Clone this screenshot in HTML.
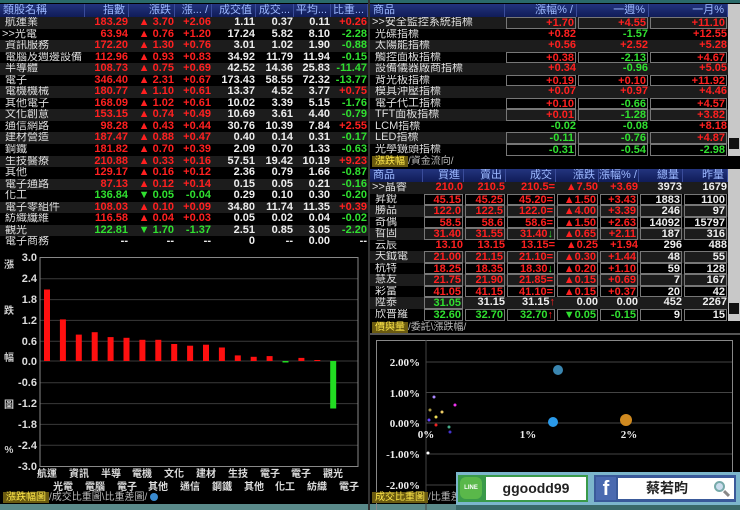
<!DOCTYPE html>
<html><head><meta charset="utf-8">
<style>
*{margin:0;padding:0;box-sizing:border-box}
body{width:740px;height:510px;background:#000;position:relative;overflow:hidden;font-family:"Liberation Sans","Noto Sans CJK TC",sans-serif;font-size:11px;font-weight:bold;color:#eee}
.p{position:absolute}
.hd{display:grid;height:13px;background:linear-gradient(#23347e,#101c58);color:#9cb8ff;font-weight:normal;font-size:11px;line-height:13px}
.hd span{text-align:right;padding-right:3px;border-right:1px solid #3a4c9a;white-space:nowrap;overflow:hidden}
.hd span:first-child{text-align:left;padding-left:3px}
.r{display:grid;height:11.55px;line-height:11.55px;white-space:nowrap}
.r:nth-child(odd){background:#1c1c1c}
.r b{font-weight:normal;padding-left:2px;overflow:hidden;color:#ddd}
.r i{font-style:normal;text-align:right;padding-right:1px;overflow:hidden}
.L{grid-template-columns:85px 44px 46px 37px 44px 38px 37px 37px}
.T{grid-template-columns:135px 72px 72px 79px}
.M{grid-template-columns:53px 41px 42px 50px 43px 40px 44px 45px}
.R{color:#ff2020}.G{color:#30e030}
.bx i{border:1px solid #777;margin:0 1px}
.sb{position:absolute;width:12px;background:#c8c8c8}
.tab{position:absolute;font-weight:normal;font-size:10px;color:#bbb;height:11px;line-height:11px}
.tab .a{background:#6a5a10;color:#ffe84a;padding:0 3px}
</style></head><body>
<div class="p" style="left:0;top:0;width:740px;height:3px;background:#2a6a6a"></div>

<!-- LEFT TABLE -->
<div class="p" style="left:0;top:4px;width:368px">
<div class="hd L"><span>類股名稱</span><span>指數</span><span>漲跌</span><span>漲... /</span><span>成交值</span><span>成交...</span><span>平均...</span><span>比重...</span></div>
<div>
<div class="r L"><b>&nbsp;航運業</b><i class=R>183.29</i><i class=R>▲ 3.70</i><i class=R>+2.06</i><i>1.11</i><i>0.37</i><i>0.11</i><i class=R>+0.26</i></div>
<div class="r L"><b>&gt;&gt;光電</b><i class=R>63.94</i><i class=R>▲ 0.76</i><i class=R>+1.20</i><i>17.24</i><i>5.82</i><i>8.10</i><i class=G>-2.28</i></div>
<div class="r L"><b>&nbsp;資訊服務</b><i class=R>172.20</i><i class=R>▲ 1.30</i><i class=R>+0.76</i><i>3.01</i><i>1.02</i><i>1.90</i><i class=G>-0.88</i></div>
<div class="r L"><b>&nbsp;電腦及週邊設備</b><i class=R>112.96</i><i class=R>▲ 0.93</i><i class=R>+0.83</i><i>34.92</i><i>11.79</i><i>11.94</i><i class=G>-0.15</i></div>
<div class="r L"><b>&nbsp;半導體</b><i class=R>108.73</i><i class=R>▲ 0.75</i><i class=R>+0.69</i><i>42.52</i><i>14.36</i><i>25.83</i><i class=G>-11.47</i></div>
<div class="r L"><b>&nbsp;電子</b><i class=R>346.40</i><i class=R>▲ 2.31</i><i class=R>+0.67</i><i>173.43</i><i>58.55</i><i>72.32</i><i class=G>-13.77</i></div>
<div class="r L"><b>&nbsp;電機機械</b><i class=R>180.77</i><i class=R>▲ 1.10</i><i class=R>+0.61</i><i>13.37</i><i>4.52</i><i>3.77</i><i class=R>+0.75</i></div>
<div class="r L"><b>&nbsp;其他電子</b><i class=R>168.09</i><i class=R>▲ 1.02</i><i class=R>+0.61</i><i>10.02</i><i>3.39</i><i>5.15</i><i class=G>-1.76</i></div>
<div class="r L"><b>&nbsp;文化創意</b><i class=R>153.15</i><i class=R>▲ 0.74</i><i class=R>+0.49</i><i>10.69</i><i>3.61</i><i>4.40</i><i class=G>-0.79</i></div>
<div class="r L"><b>&nbsp;通信網路</b><i class=R>98.28</i><i class=R>▲ 0.43</i><i class=R>+0.44</i><i>30.76</i><i>10.39</i><i>7.84</i><i class=R>+2.55</i></div>
<div class="r L"><b>&nbsp;建材營造</b><i class=R>187.47</i><i class=R>▲ 0.88</i><i class=R>+0.47</i><i>0.40</i><i>0.14</i><i>0.31</i><i class=G>-0.17</i></div>
<div class="r L"><b>&nbsp;鋼鐵</b><i class=R>181.82</i><i class=R>▲ 0.70</i><i class=R>+0.39</i><i>2.09</i><i>0.70</i><i>1.33</i><i class=G>-0.63</i></div>
<div class="r L"><b>&nbsp;生技醫療</b><i class=R>210.88</i><i class=R>▲ 0.33</i><i class=R>+0.16</i><i>57.51</i><i>19.42</i><i>10.19</i><i class=R>+9.23</i></div>
<div class="r L"><b>&nbsp;其他</b><i class=R>129.17</i><i class=R>▲ 0.16</i><i class=R>+0.12</i><i>2.36</i><i>0.79</i><i>1.66</i><i class=G>-0.87</i></div>
<div class="r L"><b>&nbsp;電子通路</b><i class=R>87.13</i><i class=R>▲ 0.12</i><i class=R>+0.14</i><i>0.15</i><i>0.05</i><i>0.21</i><i class=G>-0.16</i></div>
<div class="r L"><b>&nbsp;化工</b><i class=G>136.84</i><i class=G>▼ 0.05</i><i class=G>-0.04</i><i>0.29</i><i>0.10</i><i>0.30</i><i class=G>-0.20</i></div>
<div class="r L"><b>&nbsp;電子零組件</b><i class=R>108.03</i><i class=R>▲ 0.10</i><i class=R>+0.09</i><i>34.80</i><i>11.74</i><i>11.35</i><i class=R>+0.39</i></div>
<div class="r L"><b>&nbsp;紡織纖維</b><i class=R>116.58</i><i class=R>▲ 0.04</i><i class=R>+0.03</i><i>0.05</i><i>0.02</i><i>0.04</i><i class=G>-0.02</i></div>
<div class="r L"><b>&nbsp;觀光</b><i class=G>122.81</i><i class=G>▼ 1.70</i><i class=G>-1.37</i><i>2.51</i><i>0.85</i><i>3.05</i><i class=G>-2.20</i></div>
<div class="r L"><b>&nbsp;電子商務</b><i>--</i><i>--</i><i>--</i><i>0</i><i>--</i><i>0.00</i><i>--</i></div>
</div></div>

<!-- BAR CHART -->
<svg class="p" style="left:0;top:248px" width="368" height="255" viewBox="0 248 368 255" font-family="Liberation Sans,Noto Sans CJK TC,sans-serif">
<g stroke="#3a3a3a" stroke-width="1">
<line x1="40" y1="278.8" x2="358" y2="278.8"/><line x1="40" y1="299.6" x2="358" y2="299.6"/><line x1="40" y1="320.4" x2="358" y2="320.4"/><line x1="40" y1="341.2" x2="358" y2="341.2"/><line x1="40" y1="361" x2="358" y2="361"/><line x1="40" y1="382.8" x2="358" y2="382.8"/><line x1="40" y1="403.6" x2="358" y2="403.6"/><line x1="40" y1="424.4" x2="358" y2="424.4"/><line x1="40" y1="445.2" x2="358" y2="445.2"/>
</g>
<rect x="40" y="257.5" width="318" height="209" fill="none" stroke="#888"/>
<g fill="#ddd" font-size="11" font-weight="bold" text-anchor="end">
<text x="37" y="261">3.0</text><text x="37" y="282">2.4</text><text x="37" y="303">1.8</text><text x="37" y="324">1.2</text><text x="37" y="345">0.6</text><text x="37" y="365">0.0</text><text x="37" y="386">-0.6</text><text x="37" y="407">-1.2</text><text x="37" y="428">-1.8</text><text x="37" y="449">-2.4</text><text x="37" y="470">-3.0</text>
</g>
<g fill="#ccc" font-size="10" text-anchor="middle">
<text x="9" y="268">漲</text><text x="9" y="314">跌</text><text x="9" y="361">幅</text><text x="9" y="408">圖</text><text x="9" y="453">%</text>
</g>
<g fill="#ff1010">
<rect x="44" y="289.5" width="6" height="71.5"/><rect x="59.9" y="319.4" width="6" height="41.6"/><rect x="75.8" y="334.6" width="6" height="26.4"/><rect x="91.7" y="332.2" width="6" height="28.8"/><rect x="107.6" y="337.1" width="6" height="23.9"/><rect x="123.5" y="337.8" width="6" height="23.2"/><rect x="139.4" y="339.8" width="6" height="21.2"/><rect x="155.3" y="339.8" width="6" height="21.2"/><rect x="171.2" y="344" width="6" height="17"/><rect x="187.1" y="345.7" width="6" height="15.3"/><rect x="203" y="344.7" width="6" height="16.3"/><rect x="218.9" y="347.5" width="6" height="13.5"/><rect x="234.8" y="355.4" width="6" height="5.6"/><rect x="250.7" y="356.8" width="6" height="4.2"/><rect x="266.6" y="356.1" width="6" height="4.9"/><rect x="298.4" y="357.9" width="6" height="3.1"/><rect x="314.3" y="360" width="6" height="1"/>
</g>
<g fill="#22dd22"><rect x="282.5" y="361" width="6" height="1.5"/><rect x="330.2" y="361" width="6" height="47.5"/></g>
<g fill="#ddd" font-size="10" text-anchor="middle">
<text x="47" y="477">航運</text><text x="79" y="477">資訊</text><text x="111" y="477">半導</text><text x="142" y="477">電機</text><text x="174" y="477">文化</text><text x="206" y="477">建材</text><text x="238" y="477">生技</text><text x="270" y="477">電子</text><text x="301" y="477">電子</text><text x="333" y="477">觀光</text>
<text x="63" y="490">光電</text><text x="95" y="490">電腦</text><text x="127" y="490">電子</text><text x="158" y="490">其他</text><text x="190" y="490">通信</text><text x="222" y="490">鋼鐵</text><text x="254" y="490">其他</text><text x="285" y="490">化工</text><text x="317" y="490">紡織</text><text x="349" y="490">電子</text>
</g>
</svg>
<div class="tab" style="left:3px;top:492px"><span class="a">漲跌幅圖</span>/成交比重圖\比重差圖/ <span style="display:inline-block;width:8px;height:8px;border-radius:50%;background:#3a8ad0;vertical-align:-1px"></span></div>
<div class="p" style="left:0;top:504px;width:456px;height:6px;background:#5a8a8a"></div>

<div class="p" style="left:368px;top:0;width:2px;height:510px;background:#333"></div>

<!-- RIGHT TOP -->
<div class="p" style="left:370px;top:4px;width:358px">
<div class="hd T"><span>商品</span><span>漲幅% /</span><span>一週%</span><span>一月%</span></div>
<div>
<div class="r T bx"><b>&gt;&gt;安全監控系統指標</b><i class=R>+1.70</i><i class=R>+4.55</i><i class=R>+11.10</i></div>
<div class="r T"><b>&nbsp;光碟指標</b><i class=R>+0.82</i><i class=G>-1.57</i><i class=R>+12.55</i></div>
<div class="r T"><b>&nbsp;太陽能指標</b><i class=R>+0.56</i><i class=R>+2.52</i><i class=R>+5.28</i></div>
<div class="r T bx"><b>&nbsp;觸控面板指標</b><i class=R>+0.38</i><i class=G>-2.13</i><i class=R>+4.67</i></div>
<div class="r T"><b>&nbsp;設備儀器廠商指標</b><i class=R>+0.34</i><i class=G>-0.96</i><i class=R>+5.05</i></div>
<div class="r T bx"><b>&nbsp;背光板指標</b><i class=R>+0.19</i><i class=R>+0.10</i><i class=R>+11.92</i></div>
<div class="r T"><b>&nbsp;模具沖壓指標</b><i class=R>+0.07</i><i class=R>+0.97</i><i class=R>+4.46</i></div>
<div class="r T bx"><b>&nbsp;電子代工指標</b><i class=R>+0.10</i><i class=G>-0.66</i><i class=R>+4.57</i></div>
<div class="r T bx"><b>&nbsp;TFT面板指標</b><i class=R>+0.01</i><i class=G>-1.28</i><i class=R>+3.82</i></div>
<div class="r T"><b>&nbsp;LCM指標</b><i class=G>-0.02</i><i class=G>-0.08</i><i class=R>+8.18</i></div>
<div class="r T bx"><b>&nbsp;LED指標</b><i class=G>-0.11</i><i class=G>-0.76</i><i class=R>+4.87</i></div>
<div class="r T bx"><b>&nbsp;光學鏡頭指標</b><i class=G>-0.31</i><i class=G>-0.54</i><i class=G>-2.98</i></div>
</div></div>
<div class="sb" style="left:728px;top:4px;height:152px"></div>
<div class="p" style="left:729px;top:138px;width:10px;height:11px;background:#111"></div>
<div class="tab" style="left:372px;top:156px"><span class="a">漲跌幅</span>/資金流向/</div>

<!-- RIGHT MID -->
<div class="p" style="left:370px;top:169px;width:358px">
<div class="hd M"><span>商品</span><span>買進</span><span>賣出</span><span>成交</span><span>漲跌</span><span>漲幅% /</span><span>總量</span><span>昨量</span></div>
<div>
<div class="r M"><b>&gt;&gt;晶睿</b><i class=R>210.0</i><i class=R>210.5</i><i class=R>210.5=</i><i class=R>▲7.50</i><i class=R>+3.69</i><i>3973</i><i>1679</i></div>
<div class="r M bx"><b>&nbsp;昇銳</b><i class=R>45.15</i><i class=R>45.25</i><i class=R>45.20=</i><i class=R>▲1.50</i><i class=R>+3.43</i><i>1883</i><i>1100</i></div>
<div class="r M bx"><b>&nbsp;勝品</b><i class=R>122.0</i><i class=R>122.5</i><i class=R>122.0=</i><i class=R>▲4.00</i><i class=R>+3.39</i><i>246</i><i>97</i></div>
<div class="r M bx"><b>&nbsp;奇偶</b><i class=R>58.5</i><i class=R>58.6</i><i class=R>58.6=</i><i class=R>▲1.50</i><i class=R>+2.63</i><i>14092</i><i>15797</i></div>
<div class="r M bx"><b>&nbsp;晢固</b><i class=R>31.40</i><i class=R>31.55</i><i class=R>31.40<span class=G>↓</span></i><i class=R>▲0.65</i><i class=R>+2.11</i><i>187</i><i>316</i></div>
<div class="r M"><b>&nbsp;云辰</b><i class=R>13.10</i><i class=R>13.15</i><i class=R>13.15=</i><i class=R>▲0.25</i><i class=R>+1.94</i><i>296</i><i>488</i></div>
<div class="r M bx"><b>&nbsp;天鉞電</b><i class=R>21.00</i><i class=R>21.15</i><i class=R>21.10=</i><i class=R>▲0.30</i><i class=R>+1.44</i><i>48</i><i>55</i></div>
<div class="r M bx"><b>&nbsp;杭特</b><i class=R>18.25</i><i class=R>18.35</i><i class=R>18.30<span class=G>↓</span></i><i class=R>▲0.20</i><i class=R>+1.10</i><i>59</i><i>128</i></div>
<div class="r M bx"><b>&nbsp;慧友</b><i class=R>21.75</i><i class=R>21.90</i><i class=R>21.85=</i><i class=R>▲0.15</i><i class=R>+0.69</i><i>7</i><i>167</i></div>
<div class="r M bx"><b>&nbsp;彩富</b><i class=R>41.05</i><i class=R>41.15</i><i class=R>41.10=</i><i class=R>▲0.15</i><i class=R>+0.37</i><i>20</i><i>42</i></div>
<div class="r M"><b>&nbsp;陞泰</b><i class=G style="border:1px solid #777;margin:0 1px">31.05</i><i>31.15</i><i>31.15<span class=R>↑</span></i><i>0.00</i><i>0.00</i><i>452</i><i>2267</i></div>
<div class="r M bx"><b>&nbsp;欣普羅</b><i class=G>32.60</i><i class=G>32.70</i><i class=G>32.70<span class=R>↑</span></i><i class=G>▼0.05</i><i class=G>-0.15</i><i>9</i><i>15</i></div>
</div></div>
<div class="sb" style="left:728px;top:169px;height:152px"></div>
<div class="p" style="left:729px;top:303px;width:10px;height:11px;background:#111"></div>
<div class="tab" style="left:372px;top:322px"><span class="a">價與量</span>/委託\漲跌幅/</div>
<div class="p" style="left:370px;top:333px;width:370px;height:2px;background:#555"></div>

<!-- SCATTER -->
<svg class="p" style="left:370px;top:335px" width="370" height="175" viewBox="370 335 370 175" font-family="Liberation Serif,serif">
<rect x="376.5" y="340.5" width="356" height="170" fill="none" stroke="#888"/>
<g stroke="#444"><line x1="426" y1="362" x2="732" y2="362"/><line x1="426" y1="392.5" x2="732" y2="392.5"/><line x1="426" y1="423" x2="732" y2="423"/><line x1="426" y1="454" x2="732" y2="454"/><line x1="426" y1="485" x2="732" y2="485"/><line x1="426" y1="340" x2="426" y2="510"/></g>
<g fill="#eee" font-size="11" font-weight="bold" text-anchor="end">
<text x="420" y="366">2.00%</text><text x="420" y="397">1.00%</text><text x="420" y="427">0.00%</text><text x="420" y="458">-1.00%</text><text x="420" y="489">-2.00%</text>
</g>
<g fill="#eee" font-size="11" font-weight="bold" text-anchor="middle"><text x="426" y="438">0%</text><text x="528" y="438">1%</text><text x="629" y="438">2%</text></g>
<circle cx="558" cy="370" r="5" fill="#3a86b0"/><circle cx="553" cy="422" r="5" fill="#2a9aea"/><circle cx="626" cy="420" r="6" fill="#d08a20"/>
<g><circle cx="434" cy="397" r="1.5" fill="#aa88ff"/><circle cx="455" cy="405" r="1.5" fill="#ee33ee"/><circle cx="430" cy="410" r="1.5" fill="#aa9944"/><circle cx="442" cy="412" r="1.5" fill="#eecc66"/><circle cx="436" cy="417" r="1.5" fill="#eedd55"/><circle cx="429" cy="420" r="1.5" fill="#6644ff"/><circle cx="436" cy="425" r="1.5" fill="#ee2222"/><circle cx="449" cy="427" r="1.5" fill="#44aa88"/><circle cx="450" cy="432" r="1.5" fill="#4433cc"/><circle cx="428" cy="453" r="1.5" fill="#fff"/></g>
</svg>
<div class="tab" style="left:372px;top:492px"><span class="a">成交比重圖</span>/比重差</div>

<!-- BANNER -->
<div class="p" style="left:456px;top:472px;width:284px;height:34px;background:#7cb6cc"></div>
<div class="p" style="left:458px;top:475px;width:130px;height:27px;background:#3a9a4a"></div>
<div class="p" style="left:460px;top:477px;width:22px;height:22px;border-radius:6px;background:#5ab84a;color:#fff;font-size:6px;line-height:22px;text-align:center">LINE</div>
<div class="p" style="left:486px;top:477px;width:100px;height:23px;background:#fff;color:#222;font-size:14px;line-height:23px;text-align:center">ggoodd99</div>
<div class="p" style="left:594px;top:475px;width:142px;height:27px;background:#3a5a9a"></div>
<div class="p" style="left:596px;top:477px;width:20px;height:23px;background:#4a6ab0;color:#fff;font-size:20px;line-height:25px;text-align:center;font-family:'Liberation Sans',sans-serif">f</div>
<div class="p" style="left:618px;top:478px;width:116px;height:21px;background:#fff;color:#222;font-size:14px;line-height:21px;padding-left:28px">蔡若昀</div>
<div class="p" style="left:714px;top:481px;width:11px;height:11px;border:2px solid #7aa;border-radius:50%;background:#cde"></div>
<div class="p" style="left:723px;top:492px;width:7px;height:3px;background:#888;transform:rotate(45deg)"></div>
<div class="p" style="left:456px;top:505px;width:284px;height:5px;background:#3a6a6a"></div>
</body></html>
